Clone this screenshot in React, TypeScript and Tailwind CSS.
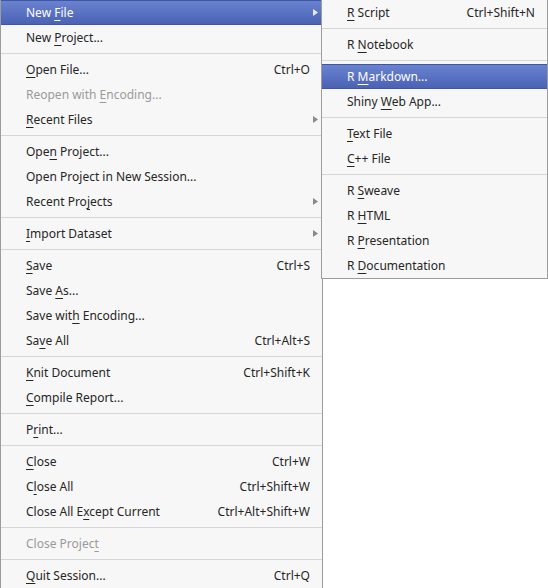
import React from 'react';

type Item =
  | { sep: true }
  | {
      sep?: false;
      label: string;
      key?: number;
      shortcut?: string;
      arrow?: boolean;
      disabled?: boolean;
      active?: boolean;
    };

const fileMenu: Item[] = [
  { label: 'New File', key: 4, arrow: true, active: true },
  { label: 'New Project...', key: 4 },
  { sep: true },
  { label: 'Open File...', key: 0, shortcut: 'Ctrl+O' },
  { label: 'Reopen with Encoding...', key: 12, disabled: true },
  { label: 'Recent Files', key: 0, arrow: true },
  { sep: true },
  { label: 'Open Project...', key: 3 },
  { label: 'Open Project in New Session...' },
  { label: 'Recent Projects', key: 10, arrow: true },
  { sep: true },
  { label: 'Import Dataset', key: 0, arrow: true },
  { sep: true },
  { label: 'Save', key: 0, shortcut: 'Ctrl+S' },
  { label: 'Save As...', key: 5 },
  { label: 'Save with Encoding...', key: 8 },
  { label: 'Save All', key: 2, shortcut: 'Ctrl+Alt+S' },
  { sep: true },
  { label: 'Knit Document', key: 0, shortcut: 'Ctrl+Shift+K' },
  { label: 'Compile Report...', key: 0 },
  { sep: true },
  { label: 'Print...', key: 1 },
  { sep: true },
  { label: 'Close', key: 0, shortcut: 'Ctrl+W' },
  { label: 'Close All', key: 1, shortcut: 'Ctrl+Shift+W' },
  { label: 'Close All Except Current', key: 11, shortcut: 'Ctrl+Alt+Shift+W' },
  { sep: true },
  { label: 'Close Project', key: 12, disabled: true },
  { sep: true },
  { label: 'Quit Session...', key: 0, shortcut: 'Ctrl+Q' },
];

const newFileMenu: Item[] = [
  { label: 'R Script', key: 0, shortcut: 'Ctrl+Shift+N' },
  { sep: true },
  { label: 'R Notebook', key: 2 },
  { sep: true },
  { label: 'R Markdown...', key: 2, active: true },
  { label: 'Shiny Web App...', key: 6 },
  { sep: true },
  { label: 'Text File', key: 0 },
  { label: 'C++ File', key: 0 },
  { sep: true },
  { label: 'R Sweave', key: 2 },
  { label: 'R HTML', key: 2 },
  { label: 'R Presentation', key: 2 },
  { label: 'R Documentation', key: 2 },
];

const Label = ({ text, k }: { text: string; k?: number }) => {
  if (k === undefined) return <span>{text}</span>;
  return (
    <span>
      {text.slice(0, k)}
      <span className="underline underline-offset-[3px] decoration-1">{text[k]}</span>
      {text.slice(k + 1)}
    </span>
  );
};

const Arrow = ({ light }: { light?: boolean }) => (
  <svg width="5" height="7" viewBox="0 0 5 7" className={light ? 'fill-[#e8ecf8]' : 'fill-[#8a8a8a]'}>
    <path d="M0 0 L5 3.5 L0 7 Z" />
  </svg>
);

const MenuRow = ({ item, right }: { item: Item; right: string }) => {
  if (item.sep) {
    return <div className="h-[7px] flex items-center"><div className="h-px w-full bg-[#d6d6d6]" /></div>;
  }
  const base = item.active
    ? 'text-white bg-gradient-to-b from-[#6a83cf] to-[#4b62b5] border-y border-[#3f56a6]'
    : item.disabled
      ? 'text-[#9a9a9a]'
      : 'text-[#262626]';
  return (
    <div className={`h-[25px] flex items-center pl-[25px] ${right} ${base}`}>
      <Label text={item.label} k={item.key} />
      <div className="flex-1" />
      {item.shortcut && <span>{item.shortcut}</span>}
      {item.arrow && <Arrow light={item.active} />}
    </div>
  );
};

export default function App() {
  return (
    <div
      className="relative w-[548px] h-[588px] bg-white overflow-hidden text-[12px] leading-none"
      style={{ fontFamily: '"Noto Sans", "Open Sans", sans-serif' }}
    >
      <div className="w-[323px] bg-[#f7f7f7] border-x border-b border-[#9c9c9c]">
        {fileMenu.map((it, i) => (
          <MenuRow key={i} item={it} right="pr-[4px] [&>span:last-child]:mr-[8px]" />
        ))}
      </div>
      <div className="absolute left-[321px] top-0 w-[227px] bg-[#f7f7f7] border border-t-0 border-[#9c9c9c]">
        {newFileMenu.map((it, i) => (
          <MenuRow key={i} item={it} right="pr-[12px]" />
        ))}
      </div>
    </div>
  );
}
